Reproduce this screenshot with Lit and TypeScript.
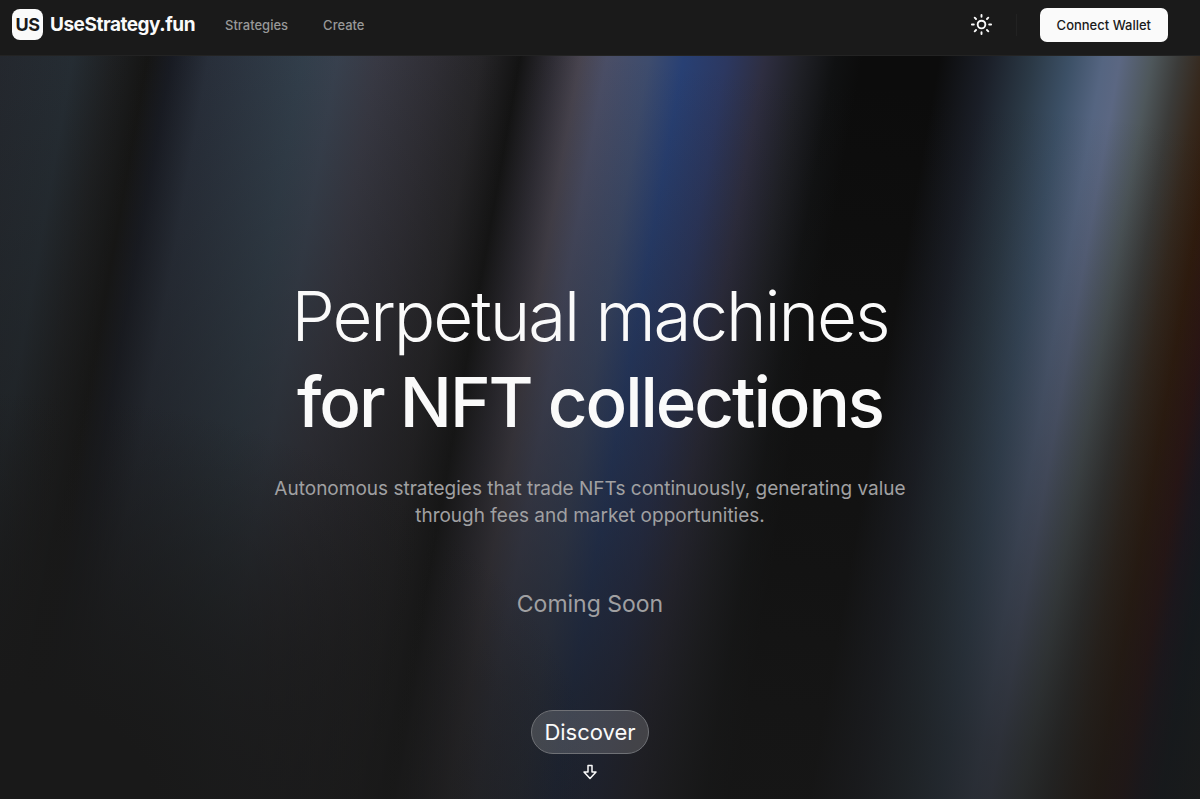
import { LitElement, html, css } from "lit";
import { customElement } from "lit/decorators.js";

@customElement("site-header")
class SiteHeader extends LitElement {
  static styles = css`
    :host {
      display: block;
      background: #1a1a1a;
      border-bottom: 1px solid #232323;
    }
    .bar {
      display: flex;
      align-items: center;
      height: 49px;
      padding: 0 32px 6px 12px;
    }
    a {
      text-decoration: none;
    }
    .brand {
      display: flex;
      align-items: center;
      gap: 7px;
      color: #fafafa;
      font-size: 19px;
      font-weight: 700;
      letter-spacing: -0.025em;
    }
    .mark {
      display: grid;
      place-items: center;
      width: 31px;
      height: 31px;
      border-radius: 8px;
      background: #fafafa;
      color: #1a1a1a;
      font-size: 18px;
    }
    nav {
      display: flex;
      gap: 35px;
      margin-left: 30px;
    }
    .link {
      color: #989898;
      font-size: 13px;
      font-weight: 500;
    }
    .actions {
      display: flex;
      align-items: center;
      margin-left: auto;
    }
    button {
      border: 0;
      margin: 0;
      font-family: inherit;
      cursor: pointer;
    }
    .theme {
      display: grid;
      place-items: center;
      width: 34px;
      height: 34px;
      padding: 0;
      background: none;
      color: #fafafa;
    }
    .divider {
      width: 1px;
      height: 22px;
      margin: 0 23px 0 17px;
      background: #222222;
    }
    .connect {
      height: 34px;
      padding: 0 17px;
      border-radius: 7px;
      background: #fafafa;
      color: #1a1a1a;
      font-size: 13px;
      font-weight: 500;
    }
  `;

  render() {
    return html`
      <header class="bar">
        <a class="brand" href="#"><span class="mark">US</span>UseStrategy.fun</a>
        <nav>
          <a class="link" href="#strategies">Strategies</a>
          <a class="link" href="#create">Create</a>
        </nav>
        <div class="actions">
          <button class="theme" type="button" aria-label="Toggle theme">
            <svg width="23" height="23" viewBox="0 0 24 24" fill="none" stroke="currentColor" stroke-width="2" stroke-linecap="round">
              <circle cx="12" cy="12" r="4" />
              <path d="M12 2v2M12 20v2M4.9 4.9l1.4 1.4M17.7 17.7l1.4 1.4M2 12h2M20 12h2M6.3 17.7l-1.4 1.4M19.1 4.9l-1.4 1.4" />
            </svg>
          </button>
          <span class="divider"></span>
          <button class="connect" type="button">Connect Wallet</button>
        </div>
      </header>
    `;
  }
}

@customElement("app-root")
class AppRoot extends LitElement {
  static styles = css`
    :host {
      display: flex;
      flex-direction: column;
      min-height: 100vh;
      background: #1a1a1a;
      color: #fafafa;
      font-family: Inter, "Liberation Sans", sans-serif;
    }
    .hero {
      flex: 1;
      display: flex;
      flex-direction: column;
      align-items: center;
      box-sizing: border-box;
      padding: 217px 20px 19px 0;
      text-align: center;
      background:
        radial-gradient(ellipse 50% 55% at 0% 100%, #191919 25%, #19191900 100%),
        linear-gradient(187deg, #19191900 8%, #191919b3 80%, #191919cc 100%),
        linear-gradient(
          100deg,
          #252930 0%,
          #262e35 5.5%,
          #1e2022 8.5%,
          #151514 11.1%,
          #181b23 12.9%,
          #29303c 15.7%,
          #33404d 22.8%,
          #394250 25.4%,
          #393a45 28.4%,
          #302f36 32.6%,
          #262528 36.2%,
          #131313 39.1%,
          #2f2d35 41.6%,
          #48444f 43.6%,
          #4a4e66 45.6%,
          #3e4c6d 48.8%,
          #284074 51.4%,
          #2c3861 54.6%,
          #2e2e41 57.5%,
          #1f2026 60.3%,
          #101112 62.8%,
          #0c0c0c 64.8%,
          #0c0c0c 70.6%,
          #1a1e27 74.2%,
          #2b3946 77.6%,
          #3c5066 80.4%,
          #556581 82.9%,
          #5b6782 84.2%,
          #4e575b 86.6%,
          #3b3b39 88.6%,
          #36291e 90.4%,
          #311b0c 92.2%,
          #2e1312 94.1%,
          #1d1520 95.4%,
          #111a22 97.1%,
          #1a1f22 100%
        );
    }
    h1 {
      margin: 0;
      font-size: 69px;
      line-height: 86px;
      font-weight: 300;
      letter-spacing: -0.03em;
    }
    .strong {
      display: block;
      font-weight: 500;
    }
    .lead {
      max-width: 660px;
      margin: 30px 0 0;
      color: #a0a0a2;
      font-size: 19px;
      line-height: 27px;
    }
    .soon {
      margin: 60px 0 0;
      color: #a0a0a2;
      font-size: 23px;
      line-height: 30px;
    }
    .discover {
      display: flex;
      flex-direction: column;
      align-items: center;
      gap: 10px;
      margin-top: auto;
      color: #fafafa;
      text-decoration: none;
    }
    .pill {
      padding: 6px 12px;
      border: 1px solid #6f7176;
      border-radius: 22px;
      background: #ffffff29;
      font-size: 22px;
      line-height: 30px;
    }
  `;

  render() {
    return html`
      <site-header></site-header>
      <main class="hero">
        <h1>Perpetual machines<span class="strong">for NFT collections</span></h1>
        <p class="lead">
          Autonomous strategies that trade NFTs continuously, generating value through fees and market opportunities.
        </p>
        <p class="soon">Coming Soon</p>
        <a class="discover" href="#discover">
          <span class="pill">Discover</span>
          <svg width="16" height="16" viewBox="0 0 16 16" fill="none" stroke="currentColor" stroke-width="1.5" stroke-linejoin="round">
            <path d="M6 1.5h4v6.5h4L8 14.5 2 8h4z" />
          </svg>
        </a>
      </main>
    `;
  }
}
